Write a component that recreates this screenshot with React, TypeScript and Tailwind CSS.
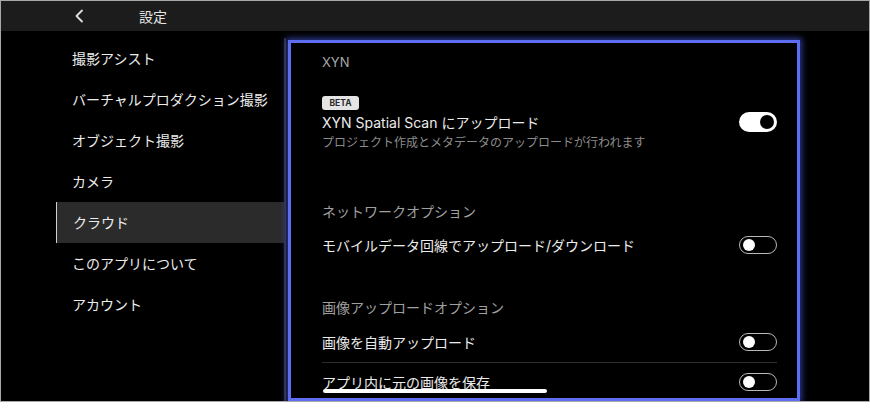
import React from "react";

const MENU = [
  "撮影アシスト",
  "バーチャルプロダクション撮影",
  "オブジェクト撮影",
  "カメラ",
  "クラウド",
  "このアプリについて",
  "アカウント",
];

function Toggle({ on }: { on?: boolean }) {
  if (on)
    return (
      <div className="w-[38px] h-[20px] rounded-full bg-white flex items-center justify-end pr-[3px] shrink-0">
        <div className="w-[14px] h-[14px] rounded-full bg-black" />
      </div>
    );
  return (
    <div className="w-[38px] h-[18px] rounded-full border-[1.5px] border-[#b8b8b8] flex items-center pl-[3px] shrink-0">
      <div className="w-[12px] h-[12px] rounded-full bg-white" />
    </div>
  );
}

function Row({ label, on }: { label: string; on?: boolean }) {
  return (
    <div className="flex items-center justify-between h-[20px]">
      <span className="text-[14px] text-[#ececec]">{label}</span>
      <Toggle on={on} />
    </div>
  );
}

export default function App() {
  return (
    <div
      className="w-[870px] h-[408px] bg-white"
      style={{ fontFamily: "Inter, 'Noto Sans CJK JP', sans-serif" }}
    >
      <div className="relative w-[870px] h-[402px] border border-[#a8a8a8] bg-black overflow-hidden flex flex-col">
        {/* header */}
        <div className="h-[30px] bg-[#1c1c1c] flex items-center shrink-0">
          <svg
            className="ml-[73px]"
            width="10"
            height="14"
            viewBox="0 0 10 14"
            fill="none"
          >
            <path
              d="M8 1.5 L2.5 7 L8 12.5"
              stroke="#e0e0e0"
              strokeWidth="1.8"
              strokeLinecap="round"
              strokeLinejoin="round"
            />
          </svg>
          <span className="ml-[55px] text-[14px] text-[#e6e6e6]">設定</span>
        </div>

        <div className="flex flex-1 min-h-0">
          {/* sidebar */}
          <div className="w-[283px] pt-[7px] shrink-0">
            {MENU.map((m) => (
              <div
                key={m}
                className={`ml-[55px] h-[41px] flex items-center pl-[16px] text-[14px] text-[#ececec] ${
                  m === "クラウド"
                    ? "bg-[#2b2b2b] border-l border-[#cfcfcf] pl-[15px]"
                    : ""
                }`}
              >
                {m}
              </div>
            ))}
          </div>
          <div className="w-[2px] mt-[7px] bg-[#2a2a2a] shrink-0" />

          {/* panel */}
          <div className="ml-[2px] mt-[9px] w-[512px] h-[361px] overflow-hidden border-[3px] border-[#5d6ef2] shadow-[0_0_6px_2px_rgba(80,100,255,0.55)] bg-black pl-[31px] pr-[20px] pt-[10px] shrink-0">
            <div className="h-[20px] flex items-center text-[13px] text-[#a8a8a8]">
              XYN
            </div>
            <div className="mt-[23px] h-[14px] w-[37px] rounded-[3px] bg-[#e4e4e4] text-[#2a2a2a] text-[8.5px] font-bold flex items-center justify-center">
              BETA
            </div>
            <div className="mt-[2px]">
              <Row label="XYN Spatial Scan にアップロード" on />
            </div>
            <div className="mt-[2px] h-[18px] flex items-center text-[12px] text-[#8c8c8c]">
              プロジェクト作成とメタデータのアップロードが行われます
            </div>

            <div className="mt-[49px] h-[20px] flex items-center text-[14px] text-[#a0a0a0]">
              ネットワークオプション
            </div>
            <div className="mt-[14px]">
              <Row label="モバイルデータ回線でアップロード/ダウンロード" />
            </div>

            <div className="mt-[42px] h-[20px] flex items-center text-[14px] text-[#a0a0a0]">
              画像アップロードオプション
            </div>
            <div className="mt-[15px]">
              <Row label="画像を自動アップロード" />
            </div>
            <div className="mt-[10px] h-px bg-[#2c2c2c]" />
            <div className="mt-[9px]">
              <Row label="アプリ内に元の画像を保存" />
            </div>
          </div>
        </div>

        {/* home indicator */}
        <div className="absolute left-[322px] top-[388px] w-[224px] h-[4px] rounded-full bg-white" />
      </div>
    </div>
  );
}
